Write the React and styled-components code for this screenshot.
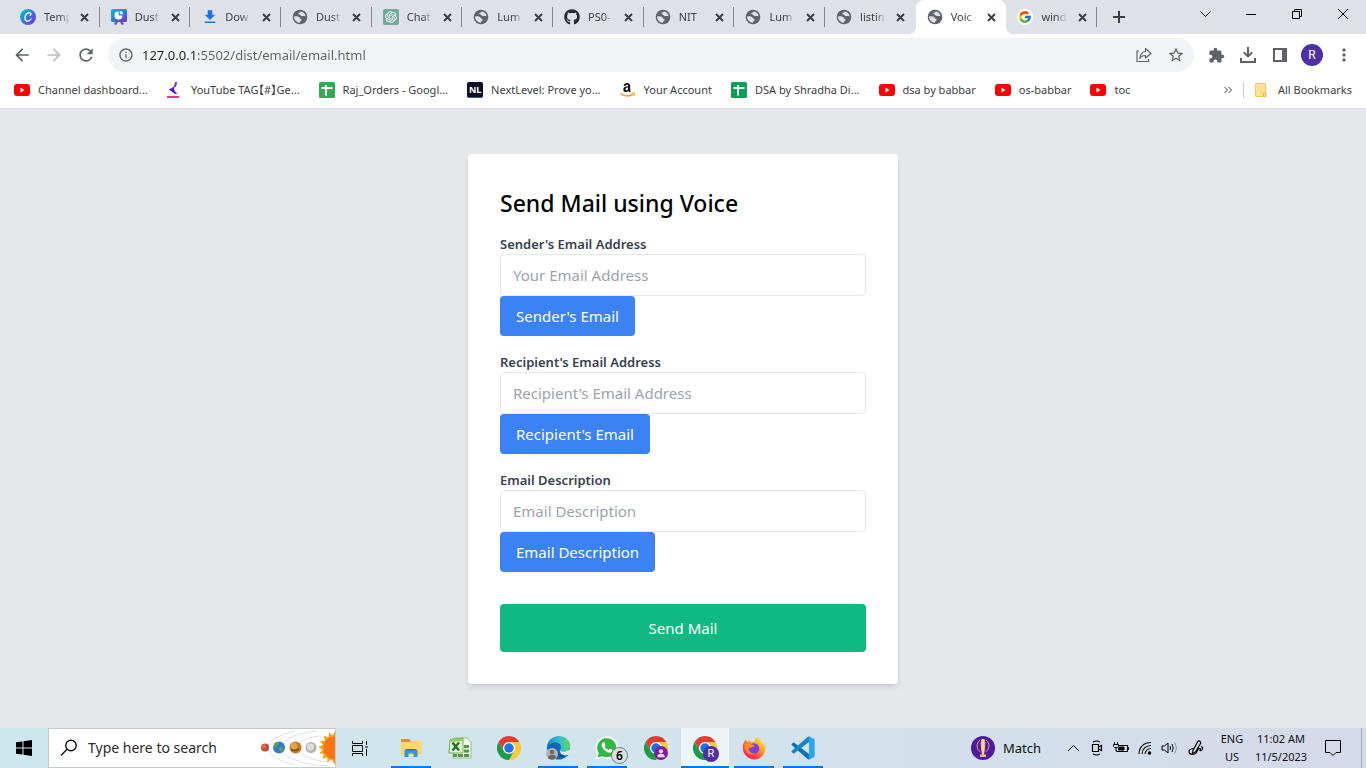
import React from "react";
import styled, { createGlobalStyle, css } from "styled-components";
import { FaGithub } from "react-icons/fa";
import { FcGoogle } from "react-icons/fc";
import { RiOpenaiFill } from "react-icons/ri";
import {
  MdArrowBack,
  MdArrowForward,
  MdRefresh,
  MdInfoOutline,
  MdStarBorder,
  MdExtension,
  MdMoreVert,
  MdDownload,
} from "react-icons/md";

const GlobalStyle = createGlobalStyle`
  *, *::before, *::after { box-sizing: border-box; }
  body {
    margin: 0;
    font-family: "Noto Sans", "Open Sans", "Noto Sans CJK JP", sans-serif;
    font-size: 11px;
    line-height: 16px;
    color: #3c4043;
  }
  button, input { font: inherit; color: inherit; }
  button { border: 0; padding: 0; background: none; cursor: pointer; }
  svg { display: block; flex: none; }
`;

const Screen = styled.div`
  min-height: 100vh;
  display: flex;
  flex-direction: column;
`;

/* Tab strip */

const TabStrip = styled.header`
  display: flex;
  height: 34px;
  padding-left: 9px;
  background: #dee1e6;
`;

const TabList = styled.div`
  flex: 1;
  display: flex;
  min-width: 0;
`;

const Tab = styled.div`
  flex: 1 1 0;
  min-width: 0;
  position: relative;
  display: flex;
  align-items: center;
  padding: 0 7px 0 11px;
  ${(p) =>
    p.$divider &&
    css`
      &::after {
        content: "";
        position: absolute;
        right: 0;
        top: 7px;
        width: 1px;
        height: 20px;
        background: #80868b;
      }
    `}
  ${(p) =>
    p.$active &&
    css`
      background: #fff;
      border-radius: 8px 8px 0 0;
      &::before,
      &::after {
        content: "";
        position: absolute;
        bottom: 0;
        width: 8px;
        height: 8px;
      }
      &::before {
        right: 100%;
        background: radial-gradient(circle at 0 0, transparent 8px, #fff 8px);
      }
      &::after {
        left: 100%;
        background: radial-gradient(circle at 100% 0, transparent 8px, #fff 8px);
      }
    `}
`;

const TabButton = styled.button`
  flex: 1;
  min-width: 0;
  display: flex;
  align-items: center;
  gap: 8px;
  color: #3c4043;
`;

const TabIcon = styled.span`
  flex: none;
  width: 16px;
  display: grid;
  place-items: center;
`;

const TabTitle = styled.span`
  width: 26px;
  overflow: hidden;
  white-space: nowrap;
  text-align: left;
  mask-image: linear-gradient(to right, #000 60%, transparent);
`;

const TabClose = styled.button`
  flex: none;
  width: 16px;
  height: 16px;
  display: grid;
  place-items: center;
  color: #3c4043;
`;

const NewTabArea = styled.div`
  flex: none;
  width: 85px;
  padding-left: 8px;
  display: flex;
  align-items: center;
`;

const NewTab = styled.button`
  width: 28px;
  height: 28px;
  display: grid;
  place-items: center;
  color: #3c4043;
`;

const WindowControls = styled.div`
  flex: none;
  display: flex;
`;

const WindowButton = styled.button`
  width: 46px;
  height: 28px;
  display: grid;
  place-items: center;
  color: #000;
`;

/* Toolbar */

const Toolbar = styled.nav`
  display: flex;
  align-items: center;
  height: 38px;
  padding: 4px 6px 0;
  background: #fff;
`;

const ToolButton = styled.button`
  flex: none;
  width: 32px;
  height: 32px;
  display: grid;
  place-items: center;
  color: ${(p) => (p.$muted ? "#babcbe" : "#5f6368")};
`;

const AddressBar = styled.div`
  flex: 1;
  min-width: 0;
  height: 34px;
  margin: 0 6px;
  padding: 0 2px 0 10px;
  display: flex;
  align-items: center;
  border-radius: 17px;
  background: #f1f3f4;
  color: #5f6368;
`;

const AddressInput = styled.input`
  flex: 1;
  min-width: 0;
  margin-left: 8px;
  border: 0;
  outline: 0;
  padding: 0;
  font-size: 13px;
  line-height: 20px;
  color: #5f6368;
  background: linear-gradient(to right, #202124 55px, #5f6368 55px);
  background-clip: text;
  -webkit-text-fill-color: transparent;
`;

const Avatar = styled.span`
  width: 22px;
  height: 22px;
  border-radius: 50%;
  display: grid;
  place-items: center;
  background: #512da8;
  color: #fff;
  font-family: Roboto, sans-serif;
  font-size: 12px;
`;

/* Bookmarks */

const BookmarkBar = styled.nav`
  display: flex;
  align-items: center;
  justify-content: space-between;
  height: 37px;
  padding: 0 14px;
  border-bottom: 1px solid #dadce0;
  background: #fff;
`;

const BookmarkGroup = styled.div`
  display: flex;
  align-items: center;
  gap: 19px;
`;

const Bookmark = styled.a`
  display: flex;
  align-items: center;
  gap: 8px;
  color: #3c4043;
  text-decoration: none;
  white-space: nowrap;
  font-feature-settings: "halt";
`;

const BookmarkOverflow = styled(BookmarkGroup)`
  gap: 10px;
`;

const BarDivider = styled.span`
  width: 1px;
  height: 16px;
  background: #c8cace;
`;

/* Page */

const Page = styled.main`
  flex: 1;
  display: grid;
  place-items: center;
  padding: 16px;
  background: #e5e7eb;
`;

const Card = styled.form`
  width: 100%;
  max-width: 430px;
  padding: 32px;
  border-radius: 4px;
  background: #fff;
  box-shadow: 0 4px 6px -1px rgba(0, 0, 0, 0.1), 0 2px 4px -1px rgba(0, 0, 0, 0.06);
`;

const Title = styled.h1`
  margin: 0 0 14px;
  font-size: 23px;
  line-height: 34px;
  font-weight: 500;
  color: #000;
`;

const Field = styled.div`
  margin-bottom: 16px;
`;

const FieldLabel = styled.label`
  display: block;
  font-size: 13px;
  line-height: 20px;
  font-weight: 600;
  color: #374151;
`;

const FieldInput = styled.input`
  display: block;
  width: 100%;
  height: 42px;
  padding: 8px 12px;
  border: 1px solid #e5e7eb;
  border-radius: 4px;
  font-size: 15px;
  line-height: 24px;
  color: #111827;
  &::placeholder {
    color: #9ca3af;
    opacity: 1;
  }
`;

const FormButton = styled.button`
  display: block;
  padding: 8px 16px;
  border-radius: 4px;
  font-size: 15px;
  line-height: 24px;
  color: #fff;
  background: #3b82f6;
`;

const SubmitButton = styled(FormButton)`
  width: 100%;
  margin-top: 32px;
  padding: 12px 16px;
  background: #10b981;
`;

/* Taskbar */

const Taskbar = styled.footer`
  display: flex;
  height: 40px;
  background: linear-gradient(to right, #cde7ee, #d2e4ec 45%, #d3dfea 75%, #d5d9e9);
  color: #111;
`;

const TaskButton = styled.button`
  flex: none;
  width: 48px;
  display: grid;
  place-items: center;
  color: #000;
`;

const SearchBox = styled.label`
  flex: none;
  width: 288px;
  display: flex;
  align-items: center;
  gap: 10px;
  padding-left: 11px;
  border: 1px solid #c3c8ca;
  background: #fff;
  overflow: hidden;
`;

const SearchInput = styled.input`
  flex: 1;
  min-width: 0;
  padding: 0;
  border: 0;
  outline: 0;
  background: none;
  font-size: 14px;
  line-height: 20px;
  &::placeholder {
    color: #2b2b2b;
    opacity: 1;
  }
`;

const AppList = styled.div`
  display: flex;
  gap: 1px;
  padding-left: 3px;
`;

const AppButton = styled(TaskButton)`
  background: ${(p) => (p.$active ? "#edf3f7" : "none")};
  &::after {
    content: "";
    grid-area: 1 / 1;
    align-self: end;
    width: ${(p) => (p.$active ? "48px" : "40px")};
    height: 2px;
    background: ${(p) => (p.$running ? "#0078d7" : "transparent")};
  }
`;

const AppIcon = styled.span`
  grid-area: 1 / 1;
  position: relative;
`;

const CountBadge = styled.span`
  position: absolute;
  left: 16px;
  top: 11px;
  width: 17px;
  height: 17px;
  display: grid;
  place-items: center;
  border: 1px solid #777;
  border-radius: 50%;
  background: #dcdfe0;
  color: #000;
  font-size: 12px;
  font-weight: 600;
`;

const ProfileBadge = styled.span`
  position: absolute;
  left: 10px;
  top: 10px;
  width: ${(p) => p.$size};
  height: ${(p) => p.$size};
  display: grid;
  place-items: center;
  border-radius: 50%;
  background: ${(p) => p.$color};
  color: #fff;
  font-family: Roboto, sans-serif;
`;

const Tray = styled.div`
  flex: none;
  display: flex;
  align-items: stretch;
  margin-left: auto;
`;

const NewsButton = styled.button`
  display: flex;
  align-items: center;
  gap: 8px;
  width: 90px;
  font-size: 13px;
  line-height: 20px;
  color: #111;
`;

const TrayButton = styled.button`
  width: ${(p) => (p.$wide ? "30px" : "24px")};
  display: grid;
  place-items: center;
  color: #000;
`;

const TrayText = styled.button`
  width: ${(p) => p.$width};
  line-height: 18px;
  text-align: center;
  white-space: nowrap;
  color: #111;
`;

const ShowDesktop = styled.button`
  width: 5px;
  margin-left: 4px;
  border-left: 1px solid #a5adb8;
`;

/* Icons */

const Globe = () => (
  <svg width="16" height="16" viewBox="0 0 16 16">
    <circle cx="8" cy="8" r="7.300" fill="#5f6368" />
    <path
      d="M2 7.600c1.800-.5 3.900-.5 5.100.3 1 .7.200 1.300 1 1.700.8.3 1.700.4 1.500 1.400-.2.900-1.600.9-1.600 2.700-3.500 0-6-2.600-6-6.100zM9 2.500c-.3 1-2.500.8-2.700 2-.1 1.100 1.600.7 2 1.600.4 1 1.500 1.300 2.500 1 1-.2 1.900.2 2.700.1 0-2.200-2-4.300-4.500-4.700z"
      fill="#dee1e6"
    />
  </svg>
);

const Canva = () => (
  <svg width="16" height="16" viewBox="0 0 16 16">
    <defs>
      <linearGradient id="canva" x1="0" y1="0.2" x2="0.9" y2="1">
        <stop offset="0" stopColor="#00c4cc" />
        <stop offset="0.5" stopColor="#3a72e0" />
        <stop offset="1" stopColor="#7d2ae8" />
      </linearGradient>
    </defs>
    <circle cx="8" cy="8" r="8" fill="url(#canva)" />
    <path
      d="M10.200 6.300c1-.8 1-2.600-.8-2.700-2.600-.1-4.600 3.100-4.500 5.600.1 2 1.400 3.200 3 3 1.400-.2 2.400-1.100 3.100-2.200"
      fill="none"
      stroke="#fff"
      strokeWidth="1.300"
      strokeLinecap="round"
    />
  </svg>
);

const Board = () => (
  <svg width="16" height="16" viewBox="0 0 16 16">
    <defs>
      <linearGradient id="board" x1="0" y1="0" x2="0.7" y2="1">
        <stop offset="0" stopColor="#08c0d0" />
        <stop offset="0.5" stopColor="#2f7be5" />
        <stop offset="1" stopColor="#7d2ae8" />
      </linearGradient>
    </defs>
    <path
      d="M1.500 0h13Q16 0 16 1.500v10Q16 13 14.500 13h-3l1.500 2-2 1-2-3H7l-2 3-2-1 1.500-2h-3Q0 13 0 11.500v-10Q0 0 1.500 0z"
      fill="url(#board)"
    />
    <path d="M7.500 2.500v4h4a4 4 0 1 1-4-4z" fill="#fff" />
    <path d="M8.700 1.800a3.500 3.500 0 0 1 3.500 3.500H8.700z" fill="#c9f1fa" />
  </svg>
);

const OpenAi = () => (
  <svg width="16" height="16" viewBox="0 0 16 16">
    <rect width="16" height="16" rx="2" fill="#74aa9c" />
    <RiOpenaiFill x="1" y="1" size="14" color="#fff" />
  </svg>
);

const GoogleIcon = () => (
  <svg width="16" height="16" viewBox="0 0 16 16">
    <circle cx="8" cy="8" r="8" fill="#fff" />
    <FcGoogle x="1" y="1" size="14" />
  </svg>
);

const YouTube = () => (
  <svg width="16" height="16" viewBox="0 0 16 16">
    <rect y="2" width="16" height="12" rx="3" fill="#f00" />
    <path d="M6.500 5.600v4.800L10.500 8z" fill="#fff" />
  </svg>
);

const TagIcon = () => (
  <svg width="16" height="16" viewBox="0 0 16 16">
    <path d="M9 0Q9 3 7.500 5" fill="none" stroke="#7a2be8" strokeWidth="2" />
    <path d="M8 4 2 7.500 8 12l2.500-.5Q7.500 9.500 7 7.500T8 4z" fill="#5316d0" />
    <path d="M0 15h12" stroke="#e8358b" strokeWidth="2" />
  </svg>
);

const Sheet = ({ color = "#0f9d58" }) => (
  <svg width="16" height="16" viewBox="0 0 16 16">
    <rect width="16" height="16" rx="1.500" fill={color} />
    <path d="M2.500 6h11M7 3v10.500" stroke="#fff" strokeWidth="2" />
  </svg>
);

const NextLevelBox = styled.span`
  width: 16px;
  height: 16px;
  display: grid;
  place-items: center;
  border-radius: 2px;
  border-bottom: 1px solid #3555b8;
  background: #0b0d24;
  color: #fff;
  font-size: 9px;
  line-height: 12px;
  font-weight: 700;
`;

const AmazonIcon = () => (
  <svg width="16" height="16" viewBox="0 0 16 16">
    <path
      d="M3.500 3.800C3.900 1.800 5.300 1 7 1c1.900 0 3.200.9 3.200 2.800v3.600c0 .8.3 1.200.7 1.700L9.500 10.300 8.300 9C6.700 10.700 3.300 10.300 3.300 7.400c0-2.300 2-3.100 4.700-3.200 0-1.100-.2-1.500-1.100-1.500-.8 0-1.200.4-1.400 1.300zM8 5.500c-1.500 0-2.500.5-2.500 1.800 0 1.700 2.500 1.500 2.500-.8z"
      fill="#111"
    />
    <path d="M.5 11.500c4 3 8.500 3 12.700.9" stroke="#f90" strokeWidth="1.500" fill="none" />
    <path d="M11.500 11h3l-.6 2.800" stroke="#f90" strokeWidth="1.100" fill="none" />
  </svg>
);

const Folder = () => (
  <svg width="16" height="16" viewBox="0 0 16 16">
    <path d="M1.500 1.500h10v10.500l-1.500 2.500H1.500z" fill="#fde293" stroke="#f2cb55" />
    <path d="M9.500 11h2.500v3.500H9.500z" fill="#fde293" stroke="#e5b93a" />
  </svg>
);

const Share = () => (
  <svg width="16" height="16" viewBox="0 0 16 16" fill="none" stroke="#5f6368" strokeWidth="1.200">
    <path d="M3 4H1v10.500h11.500V12" />
    <path d="M9.500 1.500 15 6.500l-5.500 4.500V8.500C7 8.500 5 9 3.800 11.500 4.200 7 6.500 4.800 9.500 4.500z" strokeLinejoin="round" />
  </svg>
);

const DownloadTray = () => (
  <svg width="16" height="16" viewBox="0 0 16 16" fill="none" stroke="#5f6368" strokeWidth="2">
    <path d="M8 0v9M3.800 5.200 8 9.400l4.200-4.200M1 11v4h14v-4" />
  </svg>
);

const SidePanel = () => (
  <svg width="14" height="14" viewBox="0 0 14 14">
    <path d="M1 1h12v12H1z" fill="none" stroke="#5f6368" strokeWidth="2" />
    <path d="M9 1h4v12H9z" fill="#5f6368" />
  </svg>
);

const LineIcon = ({ d, w = 10, h = 10, stroke = 1 }) => (
  <svg width={w} height={h} viewBox={`0 0 ${w} ${h}`} fill="none" stroke="currentColor" strokeWidth={stroke}>
    <path d={d} />
  </svg>
);

const ChromeIcon = () => (
  <svg width="24" height="24" viewBox="0 0 48 48">
    <circle cx="24" cy="24" r="12" fill="#fff" />
    <path
      d="M24,12H44.7812a23.9939,23.9939,0,0,0-41.5639.0029L13.6079,30l.0093-.0024A11.9852,11.9852,0,0,1,24,12Z"
      fill="#e33b2e"
    />
    <path
      d="M34.3913,30.0029,24.0007,48A23.994,23.994,0,0,0,44.78,12.0031H23.9989l-.0025.0093A11.985,11.985,0,0,1,34.3913,30.0029Z"
      fill="#fcc934"
    />
    <path
      d="M13.6086,30.0031,3.218,12.006A23.994,23.994,0,0,0,24.0025,48L34.3931,30.0029l-.0067-.0068a11.9852,11.9852,0,0,1-20.7778.007Z"
      fill="#1e9a4b"
    />
    <circle cx="24" cy="24" r="9.500" fill="#1a73e8" />
  </svg>
);

const Explorer = () => (
  <svg width="22" height="20" viewBox="0 0 22 20">
    <path d="M1 1h8l2 2h10v5H1z" fill="#d9960a" />
    <path d="M1 4h9l1.500-1.500H20.500q1 0 1 1V17H1z" fill="#ffd767" />
    <path d="M4.500 19v-6q0-2 2-2h9q2 0 2 2v6h-4v-3.500h-5V19z" fill="#3596dd" />
    <path d="M6 11h10l-1 1.500H7z" fill="#1b76bd" />
  </svg>
);

const Excel = () => (
  <svg width="24" height="24" viewBox="0 0 24 24">
    <path d="M7 2h12l4 4v16H5z" fill="#f4f9f0" stroke="#9dbb8e" />
    <path d="M16 9h5v3h-5zM16 13.500h5v3h-5zM10 18h5v3h-5zM16 18h5v3h-5zM5 18h4v3H5z" fill="#4d9a47" />
    <path d="M2 3.500 15 2v15L1 17z" fill="#e3f2d6" stroke="#6db04f" />
    <path d="M2 3.500 15 2v3L2 6z" fill="#8fcc62" />
    <path d="m4.500 6.500 6.500 8M11 6.500l-6.500 8" stroke="#23702b" strokeWidth="2.400" />
  </svg>
);

const Edge = () => (
  <svg width="25" height="24" viewBox="0 0 25 24">
    <defs>
      <linearGradient id="edgeTop" x1="0" y1="0.5" x2="1" y2="0.4">
        <stop offset="0" stopColor="#1586d0" />
        <stop offset="0.55" stopColor="#2fc0cf" />
        <stop offset="1" stopColor="#68d856" />
      </linearGradient>
    </defs>
    <circle cx="12.500" cy="12" r="11.500" fill="#1067b8" />
    <path
      d="M.8 12C1.500 4.500 6.500.3 13 .3 20 .3 24.500 5 24.300 10c-.1 3.500-2.800 5.500-6.300 5.500-2.500 0-4-.8-4-1.700 0-.7 1-1.100 1-2.800C15 8.500 12.500 6.500 9.300 6.500 5 6.500 1.800 9 .8 12z"
      fill="url(#edgeTop)"
    />
    <path d="M9.500 12c-1 5 2.500 9 7.500 9 2.500 0 4.500-1 6-2.500-5 2-13.500.5-13.500-6.500z" fill="#0c4a94" />
    <path d="M14 13.800c0 2 5.500 2.700 9 0 1-.7 2-.5 1.700.8-.3 1.600-1 3.200-2.200 4.500-4 1.500-9.500-1-8.500-5.300z" fill="#d7e8ef" />
    <circle cx="6" cy="18" r="6" fill="#b4b4b4" />
    <circle cx="6" cy="16" r="2.300" fill="#686868" />
    <path d="M2 22q0-3.200 4-3.200t4 3.200q-4 3.500-8 0z" fill="#686868" />
  </svg>
);

const WhatsApp = () => (
  <svg width="24" height="24" viewBox="0 0 24 24">
    <path d="M.5 23.500 2 17.300A11.400 11.400 0 1 1 7 22z" fill="#fff" />
    <path d="M2.500 21.500 3.700 17A9.600 9.600 0 1 1 7.200 20.200z" fill="#2fb944" />
    <path
      d="M8 6.500c-2.800 2-.5 5.500 1.300 7.300 2 2 5.700 4.200 7.600 2 .8-1 .7-1.800 0-2.200l-1.700-.9c-.7-.3-1.200 1.300-1.800 1.200-1.700-.5-3.200-2-3.800-3.400-.2-.6 1.100-1.100.8-1.800l-.8-1.900C9.300 6.200 8.700 6.200 8 6.500z"
      fill="#fff"
    />
  </svg>
);

const Firefox = () => (
  <svg width="24" height="24" viewBox="0 0 24 24">
    <defs>
      <linearGradient id="fox" x1="0.85" y1="0.1" x2="0.2" y2="0.95">
        <stop offset="0" stopColor="#ffe44d" />
        <stop offset="0.4" stopColor="#ff9a22" />
        <stop offset="0.7" stopColor="#ff4a43" />
        <stop offset="1" stopColor="#e92268" />
      </linearGradient>
    </defs>
    <path
      d="M22.500 8.500c-.5-1.200-1.500-2.500-2.400-2.900.5 1 .7 1.700.8 2.500C19.500 4.800 17 3.500 15.500.3 13.500 1.800 12.800 4 12.700 5.500c-1 0-2 .3-2.700.7-1.100-.2-1.900-.8-2.300-2-.8.5-1.300 1.200-1.500 1.900-1-.2-1.800-1.100-2.200-2.600C2.300 5 1 7.500.8 10.500.4 18 6 23.500 12.200 23.500c6.300 0 11.300-5.300 11.300-11.500 0-1.300-.4-2.500-1-3.500z"
      fill="url(#fox)"
    />
    <path
      d="M7 12c1 .3 2.300 0 3.500-1 1-.7 1.800-.8 2.300-.7-.9-1.500-2.500-2-4.200-1.500 2-2.200 5.500-2 7.500.5 2.600 3.500.5 8.200-3.600 8.400C9 17.900 6.700 15 7 12z"
      fill="#7c3ee0"
    />
    <path d="M2.500 8c2-1.500 4-1.300 6 .8 1.200.1 2.600.3 3 1-.8 1.500-3 1.400-4.500 2.200-.8 3.300 2 6 5.500 5.500-5.500 3-11-2.500-10-9.500z" fill="#ff8b25" />
  </svg>
);

const VsCode = () => (
  <svg width="24" height="24" viewBox="0 0 24 24">
    <path d="M.5 8.200 2 6.800q.6-.5 1.300 0L18 18v5.500q-.8.100-1.400-.4L.6 8.900q-.3-.4-.1-.7z" fill="#0f70b3" />
    <path d="M.5 15.800 2 17.200q.6.500 1.300 0L18 6V.5q-.8-.1-1.400.4L.6 15.100q-.3.400-.1.700z" fill="#1684c8" />
    <path d="M16.700.8q.6-.6 1.500-.2l4.600 2.200q.9.500.9 1.400v15.600q0 .9-.9 1.400l-4.600 2.200q-.9.400-1.500-.2 1.300.7 1.300-1V1.800q0-1.600-1.300-1z" fill="#27a5ee" />
  </svg>
);

const Solar = () => (
  <svg width="76" height="38" viewBox="0 0 76 38">
    <g fill="none" stroke="#dde0e3">
      <path d="M36 2Q10 8 8 18.500 10 30 36 36" />
      <path d="M58 2C38 4 23 10 22 18.500S42 36 70 37" />
      <path d="M62 7C48 8 38 13 38 19s18 14 34 14" />
    </g>
    <circle cx="6" cy="18.500" r="4" fill="#b9463a" />
    <circle cx="5" cy="17.500" r="2.300" fill="#e0703f" />
    <circle cx="20" cy="18.500" r="6" fill="#2f78d4" />
    <path d="M15 15c3-3 6-2 5 0s-3 1-3 3-2 1-2-3zM20 19c3-2 5 0 4 2s-4 3-4-2z" fill="#5da845" />
    <circle cx="36.500" cy="18.500" r="6" fill="#c0792c" />
    <circle cx="35" cy="17" r="3.500" fill="#e0a04c" />
    <path d="M32 20q3 3 8 0" stroke="#8c4d18" strokeWidth="1.500" fill="none" />
    <circle cx="52" cy="18.500" r="5.500" fill="#aab0b8" />
    <circle cx="51.500" cy="18" r="3.800" fill="#e2dccf" />
    <path
      d="m76 2-2.500 4.500L70 3.500l-.5 4.800-4.700-1.500 1.200 4.700-5 .5 3 3.800-4.800 2.200 4.300 2.800-3.500 3.500 4.900.7-1.500 4.800 4.700-1.500.4 5 3.900-3.200L76 36z"
      fill="#ff9d1c"
    />
    <circle cx="76" cy="19" r="11.500" fill="#ff7412" />
  </svg>
);

const Trophy = () => (
  <svg width="24" height="24" viewBox="0 0 24 24">
    <circle cx="12" cy="12" r="12" fill="#4d1b9c" />
    <path d="M9 4C5 7 5 13 9.500 16M15 4C19 7 19 13 14.500 16" stroke="#e9a27c" fill="none" />
    <path d="M9.500 6h5l-.5 7-1 5.500h-2L10 13zM9 18.500h6v2.500H9z" fill="#efb878" />
    <circle cx="12" cy="4.800" r="2" fill="#f6cf95" />
    <path d="M12 6v12" stroke="#fff0c8" />
  </svg>
);

const tabs = [
  { title: "Temp", icon: <Canva />, divider: true },
  { title: "Dust", icon: <Board />, divider: true },
  { title: "Dow", icon: <MdDownload size={18} color="#1a73e8" />, divider: true },
  { title: "Dust", icon: <Globe />, divider: true },
  { title: "Chat", icon: <OpenAi />, divider: true },
  { title: "Lum", icon: <Globe />, divider: true },
  { title: "PS0-", icon: <FaGithub size={16} color="#24292f" />, divider: true },
  { title: "NIT", icon: <Globe />, divider: true },
  { title: "Lum", icon: <Globe />, divider: true },
  { title: "listin", icon: <Globe /> },
  { title: "Voic", icon: <Globe />, active: true },
  { title: "wind", icon: <GoogleIcon />, divider: true },
];

const bookmarks = [
  { name: "Channel dashboard...", icon: <YouTube /> },
  { name: "YouTube TAG【#】Ge...", icon: <TagIcon /> },
  { name: "Raj_Orders - Googl...", icon: <Sheet color="#34a853" /> },
  { name: "NextLevel: Prove yo...", icon: <NextLevelBox>NL</NextLevelBox> },
  { name: "Your Account", icon: <AmazonIcon /> },
  { name: "DSA by Shradha Di...", icon: <Sheet /> },
  { name: "dsa by babbar", icon: <YouTube /> },
  { name: "os-babbar", icon: <YouTube /> },
  { name: "toc", icon: <YouTube /> },
];

const fields = [
  { id: "sender", label: "Sender's Email Address", placeholder: "Your Email Address", action: "Sender's Email" },
  { id: "recipient", label: "Recipient's Email Address", placeholder: "Recipient's Email Address", action: "Recipient's Email" },
  { id: "description", label: "Email Description", placeholder: "Email Description", action: "Email Description" },
];

const apps = [
  { name: "File Explorer", icon: <Explorer />, running: true },
  { name: "Excel", icon: <Excel /> },
  { name: "Chrome", icon: <ChromeIcon /> },
  { name: "Edge", icon: <Edge />, running: true },
  { name: "WhatsApp", icon: <WhatsApp />, running: true, badge: <CountBadge>6</CountBadge> },
  {
    name: "Chrome, second profile",
    icon: <ChromeIcon />,
    badge: (
      <ProfileBadge $size="14px" $color="#7b1fa2">
        <svg width="10" height="10" viewBox="0 0 12 12" fill="#f3d9f7">
          <circle cx="6" cy="4" r="2.500" />
          <path d="M1.500 11q0-4 4.500-4t4.500 4z" />
        </svg>
      </ProfileBadge>
    ),
  },
  {
    name: "Chrome, profile R",
    icon: <ChromeIcon />,
    running: true,
    active: true,
    badge: <ProfileBadge $size="16px" $color="#512da8">R</ProfileBadge>,
  },
  { name: "Firefox", icon: <Firefox />, running: true },
  { name: "Visual Studio Code", icon: <VsCode />, running: true },
];

export default function App() {
  return (
    <Screen>
      <GlobalStyle />
      <TabStrip>
        <TabList>
          {tabs.map((t, i) => (
            <Tab key={i} $active={t.active} $divider={t.divider}>
              <TabButton type="button">
                <TabIcon>{t.icon}</TabIcon>
                <TabTitle>{t.title}</TabTitle>
              </TabButton>
              <TabClose type="button" aria-label="Close tab">
                <LineIcon d="M1 1l7 7M8 1l-7 7" w={9} h={9} stroke={2} />
              </TabClose>
            </Tab>
          ))}
        </TabList>
        <NewTabArea>
          <NewTab type="button" aria-label="New tab">
            <LineIcon d="M6 0v12M0 6h12" w={12} h={12} stroke={2} />
          </NewTab>
        </NewTabArea>
        <WindowControls>
          <WindowButton type="button" aria-label="Search tabs">
            <LineIcon d="M0.500 2.500l5 5 5-5" w={11} />
          </WindowButton>
          <WindowButton type="button" aria-label="Minimize">
            <LineIcon d="M0 5.500h10" />
          </WindowButton>
          <WindowButton type="button" aria-label="Restore">
            <LineIcon d="M0.500 2.500h7v7h-7zM2.500 2V0.500h7v7H8" />
          </WindowButton>
          <WindowButton type="button" aria-label="Close">
            <LineIcon d="M0 0l10 10M10 0L0 10" />
          </WindowButton>
        </WindowControls>
      </TabStrip>

      <Toolbar>
        <ToolButton type="button" aria-label="Back"><MdArrowBack size={20} /></ToolButton>
        <ToolButton type="button" aria-label="Forward" $muted><MdArrowForward size={20} /></ToolButton>
        <ToolButton type="button" aria-label="Reload"><MdRefresh size={20} /></ToolButton>
        <AddressBar>
          <MdInfoOutline size={16} />
          <AddressInput aria-label="Address" defaultValue="127.0.0.1:5502/dist/email/email.html" />
          <ToolButton type="button" aria-label="Share"><Share /></ToolButton>
          <ToolButton type="button" aria-label="Bookmark this page"><MdStarBorder size={18} /></ToolButton>
        </AddressBar>
        <ToolButton type="button" aria-label="Extensions"><MdExtension size={17} /></ToolButton>
        <ToolButton type="button" aria-label="Downloads"><DownloadTray /></ToolButton>
        <ToolButton type="button" aria-label="Side panel"><SidePanel /></ToolButton>
        <ToolButton type="button" aria-label="Profile"><Avatar>R</Avatar></ToolButton>
        <ToolButton type="button" aria-label="Menu"><MdMoreVert size={20} /></ToolButton>
      </Toolbar>

      <BookmarkBar>
        <BookmarkGroup>
          {bookmarks.map((b) => (
            <Bookmark key={b.name} href="#">
              {b.icon}
              {b.name}
            </Bookmark>
          ))}
        </BookmarkGroup>
        <BookmarkOverflow>
          <button type="button" aria-label="More bookmarks">
            <LineIcon d="M0.500 1l3 3-3 3M4.500 1l3 3-3 3" w={9} h={8} stroke={1} />
          </button>
          <BarDivider />
          <Bookmark href="#">
            <Folder />
            All Bookmarks
          </Bookmark>
        </BookmarkOverflow>
      </BookmarkBar>

      <Page>
        <Card onSubmit={(e) => e.preventDefault()}>
          <Title>Send Mail using Voice</Title>
          {fields.map((f) => (
            <Field key={f.id}>
              <FieldLabel htmlFor={f.id}>{f.label}</FieldLabel>
              <FieldInput id={f.id} type="text" placeholder={f.placeholder} />
              <FormButton type="button">{f.action}</FormButton>
            </Field>
          ))}
          <SubmitButton type="submit">Send Mail</SubmitButton>
        </Card>
      </Page>

      <Taskbar>
        <TaskButton type="button" aria-label="Start">
          <svg width="16" height="16" viewBox="0 0 16 16">
            <path d="M0 2.300 6.500 1.400v6.100H0zM7.500 1.200 16 0v7.500H7.500zM0 8.500h6.500v6.100L0 13.700zM7.500 8.500H16V16l-8.500-1.200z" />
          </svg>
        </TaskButton>
        <SearchBox>
          <svg width="18" height="18" viewBox="0 0 18 18" fill="none" stroke="#111" strokeWidth="1.400">
            <circle cx="11" cy="6.500" r="5.200" />
            <path d="M7 10.300 1 16.500" />
          </svg>
          <SearchInput type="text" aria-label="Search" placeholder="Type here to search" />
          <Solar />
        </SearchBox>
        <TaskButton type="button" aria-label="Task view">
          <LineIcon d="M0.500 0v2.500h10V0M0.500 15v-2.500h10V15M0.500 4.500h10v6h-10zM14.500 0v4M14.500 8v7M13 6h3" w={16} h={15} />
        </TaskButton>
        <AppList>
          {apps.map((a) => (
            <AppButton key={a.name} type="button" aria-label={a.name} $running={a.running} $active={a.active}>
              <AppIcon>
                {a.icon}
                {a.badge}
              </AppIcon>
            </AppButton>
          ))}
        </AppList>
        <Tray>
          <NewsButton type="button">
            <Trophy />
            Match
          </NewsButton>
          <TrayButton type="button" aria-label="Hidden icons">
            <LineIcon d="M1 7l5.500-5.500L12 7" w={13} h={8} stroke={1} />
          </TrayButton>
          <TrayButton type="button" aria-label="Meet now">
            <svg width="12" height="16" viewBox="0 0 12 16" fill="none" stroke="currentColor">
              <path d="M1.500 4.500h6v7h-6zM7.500 7l3-1.500v5L7.500 9M2 2q4-2 7 0M2 14q4 2 7 0" strokeWidth="1.200" />
            </svg>
          </TrayButton>
          <TrayButton type="button" aria-label="Battery">
            <svg width="16" height="12" viewBox="0 0 16 12" fill="none" stroke="currentColor">
              <path d="M6 3.500h8.500v6h-11V8M15.500 5v3M1.500 0v2M4.500 0v2M.5 2.500h5v2l-1 1h-3l-1-1zM3 5.500V9" />
              <path d="M6 5h5v3H5.500z" fill="currentColor" />
            </svg>
          </TrayButton>
          <TrayButton type="button" aria-label="Network">
            <svg width="14" height="14" viewBox="0 0 14 14" fill="none" stroke="currentColor" strokeWidth="1.100">
              <path d="M1 13C1 6 6 1.500 13 1.500M4 13c0-5 4-8.500 9-8.500M7 13c0-3 3-5.500 6-5.500" />
              <circle cx="11.500" cy="12" r="1.200" fill="currentColor" />
            </svg>
          </TrayButton>
          <TrayButton type="button" aria-label="Volume">
            <svg width="17" height="14" viewBox="0 0 17 14" fill="none" stroke="currentColor">
              <path d="M1 5h2.500L7 2v10L3.500 9H1zM9 5q1.200 2 0 4M11 3q2.500 4 0 8" />
              <path d="M13.500 1.500q3.500 5.500 0 11" stroke="#8b9099" />
            </svg>
          </TrayButton>
          <TrayButton type="button" aria-label="Pen" $wide>
            <svg width="16" height="16" viewBox="0 0 16 16" fill="none" stroke="currentColor" strokeWidth="1.200">
              <path d="M4.500 13.500 5 10.500l4.500-8.500q1-1.500 2.300-.8t.7 2.300L7.500 12zM5.500 8.500Q1 9 1 11.500t3.500 3Q8.500 14 9 11.500q1-3 2.500-3t.5 2q2 .5 2.500-2 .5-1.500-1.500-2" />
            </svg>
          </TrayButton>
          <TrayText type="button" $width="42px">ENG<br />US</TrayText>
          <TrayText type="button" $width="56px">11:02 AM<br />11/5/2023</TrayText>
          <TaskButton type="button" aria-label="Notifications">
            <LineIcon d="M0.500 0.500h15v12H11L8 15.500l-3-3H0.500z" w={16} h={17} stroke={1} />
          </TaskButton>
          <ShowDesktop type="button" aria-label="Show desktop" />
        </Tray>
      </Taskbar>
    </Screen>
  );
}
